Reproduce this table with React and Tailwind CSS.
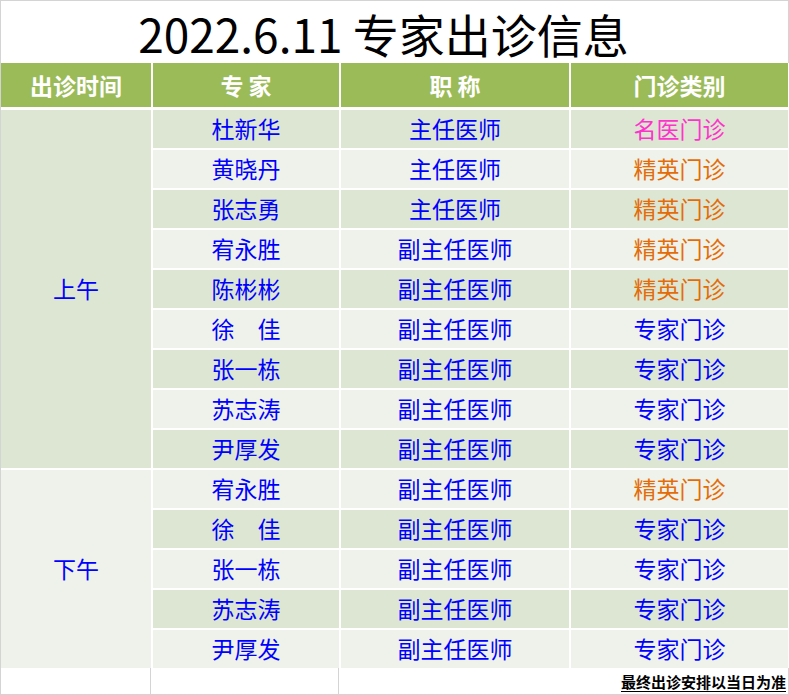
const FONT = { fontFamily: '"Noto Sans CJK SC", "Noto Sans", sans-serif' }

const TYPE_COLOR = {
  名医门诊: 'text-[#ff33cc]',
  精英门诊: 'text-[#e36c09]',
  专家门诊: 'text-[#0000ff]',
}

const ROWS = [
  ['杜新华', '主任医师', '名医门诊'],
  ['黄晓丹', '主任医师', '精英门诊'],
  ['张志勇', '主任医师', '精英门诊'],
  ['宥永胜', '副主任医师', '精英门诊'],
  ['陈彬彬', '副主任医师', '精英门诊'],
  ['徐　佳', '副主任医师', '专家门诊'],
  ['张一栋', '副主任医师', '专家门诊'],
  ['苏志涛', '副主任医师', '专家门诊'],
  ['尹厚发', '副主任医师', '专家门诊'],
  ['宥永胜', '副主任医师', '精英门诊'],
  ['徐　佳', '副主任医师', '专家门诊'],
  ['张一栋', '副主任医师', '专家门诊'],
  ['苏志涛', '副主任医师', '专家门诊'],
  ['尹厚发', '副主任医师', '专家门诊'],
]

const DARK = 'bg-[#dde6d3]'
const LIGHT = 'bg-[#eff2ea]'

export default function App() {
  return (
    <div
      className="w-[789px] h-[695px] bg-white border-l border-t border-b border-[#d4d4d4] flex flex-col"
      style={FONT}
    >
      {/* title row */}
      <div className="h-[62px] border-r border-[#d4d4d4] flex items-center justify-center pr-[22px] pt-[2px] text-[46px] leading-none text-black">
        2022.6.11 专家出诊信息
      </div>

      {/* header */}
      <div className="w-[787px] h-[44px] grid grid-cols-[150px_186px_228px_217px] gap-x-[2px] text-white font-bold text-[23px]">
        {['出诊时间', '专 家', '职 称', '门诊类别'].map((t) => (
          <div key={t} className="bg-[#9bbb59] flex items-center justify-center whitespace-pre">{t}</div>
        ))}
      </div>

      {/* body */}
      <div className="mt-[3px] w-[787px] grid grid-cols-[150px_186px_228px_217px] grid-rows-[repeat(14,38px)] gap-[2px] text-[23px] leading-none text-[#0000ff]">
        <div className={`row-span-9 col-start-1 row-start-1 flex items-center justify-center pb-[2px] ${DARK}`}>上午</div>
        <div className={`row-span-5 col-start-1 row-start-10 flex items-center justify-center pb-[2px] ${LIGHT}`}>下午</div>
        {ROWS.map(([name, title, type], i) => {
          const bg = i % 2 === 0 ? DARK : LIGHT
          return [
            <div key={`n${i}`} className={`col-start-2 flex items-center justify-center pb-[2px] whitespace-pre ${bg}`}>{name}</div>,
            <div key={`t${i}`} className={`col-start-3 flex items-center justify-center pb-[2px] ${bg}`}>{title}</div>,
            <div key={`c${i}`} className={`col-start-4 flex items-center justify-center pb-[2px] ${bg} ${TYPE_COLOR[type]}`}>{type}</div>,
          ]
        })}
      </div>

      {/* footer note */}
      <div className="flex-1 flex border-r border-[#d4d4d4]">
        <div className="w-[150px] border-r border-[#d4d4d4]" />
        <div className="w-[188px] border-r border-[#d4d4d4]" />
        <div className="flex-1 flex items-center justify-end pr-[2px]">
          <span className="text-[15px] font-bold text-black underline decoration-1 underline-offset-[3px] leading-none">
            最终出诊安排以当日为准
          </span>
        </div>
      </div>
    </div>
  )
}
